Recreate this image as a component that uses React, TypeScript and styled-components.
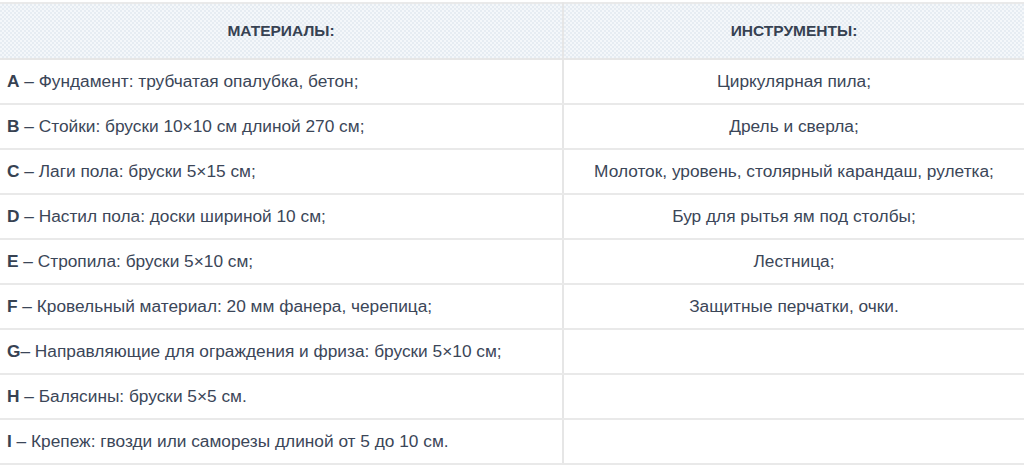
import * as React from 'react';
import styled, { createGlobalStyle } from 'styled-components';

const GlobalStyle = createGlobalStyle`
  body {
    margin: 0;
    background: #ffffff;
    font-family: 'Liberation Sans', Arial, sans-serif;
  }
`;

const materials = [
  { key: 'A', text: ' – Фундамент: трубчатая опалубка, бетон;' },
  { key: 'B', text: ' – Стойки: бруски 10×10 см длиной 270 см;' },
  { key: 'C', text: ' – Лаги пола: бруски 5×15 см;' },
  { key: 'D', text: ' – Настил пола: доски шириной 10 см;' },
  { key: 'E', text: ' – Стропила: бруски 5×10 см;' },
  { key: 'F', text: ' – Кровельный материал: 20 мм фанера, черепица;' },
  { key: 'G', text: '– Направляющие для ограждения и фриза: бруски 5×10 см;' },
  { key: 'H', text: ' – Балясины: бруски 5×5 см.' },
  { key: 'I', text: ' – Крепеж: гвозди или саморезы длиной от 5 до 10 см.' },
];

const tools = [
  'Циркулярная пила;',
  'Дрель и сверла;',
  'Молоток, уровень, столярный карандаш, рулетка;',
  'Бур для рытья ям под столбы;',
  'Лестница;',
  'Защитные перчатки, очки.',
];

const Page = styled.div`
  padding-top: 2px;
  width: 1024px;
`;

const Table = styled.table`
  width: 100%;
  border-collapse: collapse;
  table-layout: fixed;
  color: #3b4658;
  border-top: 2px solid #e9e9e9;
`;

const HeadCell = styled.th`
  height: 54px;
  padding: 0;
  font-size: 15.5px;
  font-weight: 700;
  text-transform: uppercase;
  text-align: center;
  color: #374252;
  background-color: #eef2f6;
  background-image: repeating-conic-gradient(#e6ecf2 0 25%, #f4f7fa 0 50%);
  background-size: 4px 4px;
  border-bottom: 2px solid #e6e6e6;
  border-right: 2px solid #e6e6e6;
  &:last-child {
    border-right: none;
  }
`;

const Cell = styled.td<{ $center?: boolean }>`
  height: 43px;
  padding: 0;
  font-size: 17.3px;
  text-align: ${p => (p.$center ? 'center' : 'left')};
  padding-left: ${p => (p.$center ? '0' : '7px')};
  border-bottom: 2px solid #e9e9e9;
  border-right: 2px solid #e6e6e6;
  &:last-child {
    border-right: none;
  }
`;

const Letter = styled.strong`
  font-weight: 700;
  color: #374252;
`;

export default function App() {
  return (
    <Page>
      <GlobalStyle />
      <Table>
        <colgroup>
          <col style={{ width: 563 }} />
          <col />
        </colgroup>
        <thead>
          <tr>
            <HeadCell>Материалы:</HeadCell>
            <HeadCell>Инструменты:</HeadCell>
          </tr>
        </thead>
        <tbody>
          {materials.map((m, i) => (
            <tr key={m.key}>
              <Cell>
                <Letter>{m.key}</Letter>
                {m.text}
              </Cell>
              <Cell $center>{tools[i] || ''}</Cell>
            </tr>
          ))}
        </tbody>
      </Table>
    </Page>
  );
}
